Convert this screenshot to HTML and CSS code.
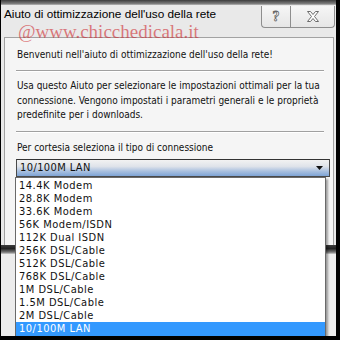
FILE: index.html
```html
<!DOCTYPE html>
<html>
<head>
<meta charset="utf-8">
<link rel="stylesheet" href="styles.css">
</head>
<body>
<div class="screen">
  <div class="window">
    <div class="topstrip"></div>
    <div class="titlebar">
      <div class="title">Aiuto di ottimizzazione dell'uso della rete</div>
      <div class="caption-buttons">
        <div class="cbtn help"><span class="qmark">?</span></div>
        <div class="cbtn close">
          <svg width="14" height="11" viewBox="0 0 14 11"><path d="M1.5 0.5h3l2.5 3 2.5-3h3l-4 5 4 5h-3l-2.5-3-2.5 3h-3l4-5z" fill="#fff" stroke="#6b6b6b" stroke-width="1"/></svg>
        </div>
      </div>
    </div>
    <div class="watermark">@www.chicchedicala.it</div>
    <div class="panel">
      <p class="welcome">Benvenuti nell'aiuto di ottimizzazione dell'uso della rete!</p>
      <div class="sep"></div>
      <p class="para">Usa questo Aiuto per selezionare le impostazioni ottimali per la tua connessione. Vengono impostati i parametri generali e le proprietà predefinite per i downloads.</p>
      <div class="sep"></div>
      <p class="label">Per cortesia seleziona il tipo di connessione</p>
      <div class="combo">
        <span class="combo-text">10/100M LAN</span>
        <svg class="arrow" width="7" height="4" viewBox="0 0 7 4"><path d="M0 0h7L3.5 4z" fill="#111"/></svg>
      </div>
    </div>
  </div>
  <div class="under-shadow"></div>
  <div class="dropdown">
    <div class="item">14.4K Modem</div>
    <div class="item">28.8K Modem</div>
    <div class="item">33.6K Modem</div>
    <div class="item">56K Modem/ISDN</div>
    <div class="item">112K Dual ISDN</div>
    <div class="item">256K DSL/Cable</div>
    <div class="item">512K DSL/Cable</div>
    <div class="item">768K DSL/Cable</div>
    <div class="item">1M DSL/Cable</div>
    <div class="item">1.5M DSL/Cable</div>
    <div class="item">2M DSL/Cable</div>
    <div class="item selected">10/100M LAN</div>
  </div>
</div>
</body>
</html>
```
FILE: styles.css
```css
* { box-sizing: border-box; }
html, body { margin: 0; padding: 0; }
body {
  width: 340px;
  height: 340px;
  background: #000;
  overflow: hidden;
  font-family: "Liberation Sans", Arial, sans-serif;
}
.screen {
  position: relative;
  width: 335px;
  height: 336px;
  margin-left: 1px;
  background: #ececec;
  overflow: hidden;
}
.window {
  height: 245px;
  background: #e9e9e9;
  display: flex;
  flex-direction: column;
  position: relative;
}
.topstrip {
  height: 5px;
  background: linear-gradient(#3c3c3c, #7a7a7a 70%, #b8b8b8);
}
.titlebar {
  height: 32px;
  display: flex;
  justify-content: space-between;
  align-items: flex-start;
  padding-left: 3px;
}
.title {
  font-family: "Liberation Sans", Arial, sans-serif;
  font-size: 11.8px;
  color: #000;
  padding-top: 2px;
}
.caption-buttons {
  display: flex;
  margin-top: 1px;
  margin-right: 1px;
}
.cbtn {
  height: 22px;
  border: 1px solid #8e8e8e;
  border-top: none;
  background: linear-gradient(#f6f6f6, #e6e6e6);
  display: flex;
  align-items: center;
  justify-content: center;
}
.help {
  width: 29px;
  border-radius: 0 0 0 4px;
  border-right: none;
}
.close {
  width: 45px;
  border-radius: 0 0 4px 0;
}
.qmark {
  font-family: "Liberation Serif", serif;
  font-size: 14px;
  font-weight: bold;
  color: #fff;
  -webkit-text-stroke: 0.8px #666;
  line-height: 14px;
}
.watermark {
  position: absolute;
  left: 17px;
  top: 21px;
  font-family: "Liberation Serif", serif;
  font-size: 19px;
  color: rgba(205, 40, 45, 0.6);
  pointer-events: none;
}
.panel {
  flex: 1;
  margin: 0 2px 0 3px;
  border: 1px solid #a2a2a2;
  border-bottom: none;
  background: #f5f5f5;
  padding: 10px 10px 0 11px;
  font-family: "DejaVu Sans Condensed", "DejaVu Sans", sans-serif;
  font-size: 10px;
  color: #111;
}
.panel p {
  margin: 0;
  line-height: 14px;
}
.welcome { margin-left: 1px !important; }
.sep {
  height: 2px;
  border-top: 1px solid #a0a0a0;
  border-bottom: 1px solid #fff;
  margin: 8px 0 7px 0;
  width: 308px;
}
.para {
  line-height: 14.5px !important;
  margin-left: 1px !important;
}
.label {
  margin-top: 8px !important;
  margin-left: 1px !important;
}
.combo {
  margin-top: 4px;
  width: 314px;
  height: 18px;
  border: 1px solid #4a4a4a;
  border-top-color: #333;
  background: linear-gradient(#f2f2f2, #dfe3ea 40%, #a9c0df 70%, #7ea4d6);
  display: flex;
  align-items: center;
  justify-content: space-between;
  padding: 0 6px 0 3px;
  font-size: 11px;
  letter-spacing: 0.4px;
  color: #111;
}
.under-shadow {
  height: 9px;
  background: linear-gradient(#3d3d3d, #222 40%, #777 80%, #cfcfcf);
}
.dropdown {
  position: absolute;
  left: 14px;
  top: 177px;
  width: 311px;
  height: 159px;
  background: #fff;
  border: 1px solid #6a6a6a;
  box-shadow: 2px 2px 2px rgba(0,0,0,0.35);
  padding-top: 1px;
  font-family: "DejaVu Sans Condensed", "DejaVu Sans", sans-serif;
  font-size: 11px;
  letter-spacing: 0.5px;
  color: #111;
}
.item {
  height: 13px;
  line-height: 13px;
  padding-left: 3px;
}
.item.selected {
  background: #3399ff;
  color: #fff;
  height: 14px;
  line-height: 14px;
}
```
